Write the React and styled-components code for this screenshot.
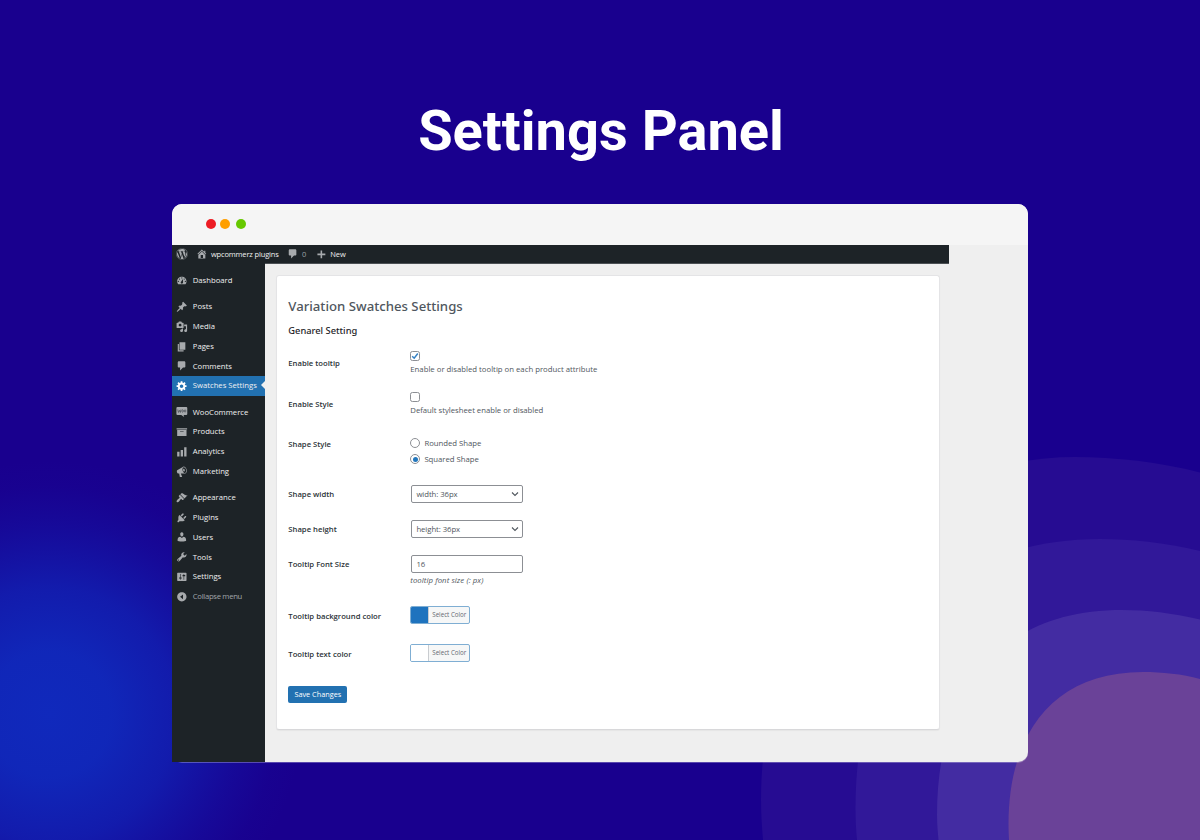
import React from 'react';
import styled, { createGlobalStyle } from 'styled-components';
import { FaWordpress } from 'react-icons/fa';

const Global = createGlobalStyle`
  * { box-sizing: border-box; }
  body { margin: 0; background: #19008e; overflow: hidden; }
`;

const Stage = styled.main`
  position: relative;
  width: 1200px;
  height: 840px;
  overflow: hidden;
  background: #19008e;
  font-family: 'Open Sans', 'Noto Sans', sans-serif;
  display: flex;
  flex-direction: column;
  align-items: center;
`;

const Backdrop = styled.svg`
  position: absolute;
  inset: 0;
`;

const Title = styled.h1`
  position: relative;
  margin: 0;
  height: 204px;
  padding: 98px 0 0 2px;
  font: 700 56px/67px Roboto, sans-serif;
  color: #fff;
  white-space: nowrap;
`;

const Window = styled.section`
  position: relative;
  width: 856px;
  height: 558px;
  border-radius: 10px;
  background: #efefef;
  box-shadow: 0 1px 0 rgba(255, 255, 255, 0.28);
`;

const TitleBar = styled.header`
  height: 41px;
  border-radius: 10px 10px 0 0;
  background: #f5f5f5;
  display: flex;
  align-items: center;
  padding-left: 34px;
`;

const Dot = styled.span`
  width: 10px;
  height: 10px;
  border-radius: 50%;
  background: ${(p) => p.$color};
  margin: -1px ${(p) => p.$gap || 0}px 0 0;
`;

const AdminBar = styled.nav`
  width: 777px;
  height: 19px;
  background: #1d2327;
  border-bottom: 1px solid #4b5054;
  display: flex;
  align-items: center;
  padding: 0 0 0 4px;
  color: #f0f0f1;
  font-size: 7.5px;
  line-height: 18px;
`;

const BarItem = styled.span`
  display: flex;
  align-items: center;
  gap: ${(p) => p.$gap || 3}px;
  margin-right: ${(p) => p.$after || 0}px;
  color: ${(p) => (p.$dim ? '#9ca2a7' : '#f0f0f1')};
  white-space: nowrap;
  letter-spacing: ${(p) => p.$track || 0}px;
`;

const Icon = styled.svg`
  width: ${(p) => p.$size || 11.7}px;
  height: ${(p) => p.$size || 11.7}px;
  fill: ${(p) => p.$color || '#a7aaad'};
  color: ${(p) => p.$color || '#a7aaad'};
  flex: none;
`;

const Body = styled.div`
  display: flex;
  height: 498px;
`;

const Sidebar = styled.aside`
  width: 93px;
  height: 499px;
  margin-top: -1px;
  background: #1d2327;
  padding-top: 7.7px;
  flex: none;
`;

const MenuItem = styled.div`
  position: relative;
  height: 19.8px;
  margin-top: ${(p) => (p.$gap ? 6.4 : 0)}px;
  padding-left: 4.4px;
  display: flex;
  align-items: center;
  gap: 4.7px;
  font-size: 7.7px;
  line-height: 19px;
  white-space: nowrap;
  letter-spacing: ${(p) => p.$track || 0}px;
  color: ${(p) => (p.$dim ? '#a0a5aa' : '#f0f0f1')};
  background: ${(p) => (p.$active ? '#2271b1' : 'transparent')};
`;

const Pointer = styled.i`
  position: absolute;
  right: 0;
  top: 5.2px;
  border: 4.7px solid transparent;
  border-right-color: #efefef;
  border-left: 0;
`;

const Card = styled.div`
  width: 664px;
  height: 455px;
  margin: 11px 0 0 11px;
  padding: 21px 12px 0 11.3px;
  background: #fff;
  border: 1px solid #e4e4e6;
  border-bottom-color: #d8d8da;
  border-radius: 3px;
  box-shadow: 0 1px 1px rgba(0, 0, 0, 0.04);
`;

const Heading = styled.h2`
  margin: 0;
  font-family: 'Noto Sans', sans-serif;
  font-size: 13.2px;
  line-height: 18px;
  font-weight: 500;
  color: #50575e;
`;

const Subheading = styled.h3`
  margin: 8px 0 0;
  font-family: 'Noto Sans', sans-serif;
  font-size: 9.3px;
  line-height: 16px;
  font-weight: 500;
  color: #1d2327;
`;

const Form = styled.div`
  margin-top: 4.4px;
`;

const Row = styled.div`
  display: grid;
  grid-template-columns: 122px 1fr;
  height: ${(p) => p.$h}px;
`;

const Label = styled.div`
  padding-top: ${(p) => p.$top}px;
  font-size: 7.7px;
  line-height: 12px;
  font-weight: 600;
  color: #2c3338;
`;

const Control = styled.div`
  padding-top: ${(p) => p.$top}px;
  font-size: 7.75px;
  line-height: 12px;
  color: #50575e;
  display: flex;
  flex-direction: column;
  align-items: flex-start;
`;

const Check = styled.span`
  width: 10px;
  height: 10px;
  border: 1px solid #8c8f94;
  border-radius: 2.4px;
  background: #fff;
  display: flex;
  align-items: center;
  justify-content: center;
`;

const Description = styled.p`
  margin: ${(p) => p.$top || 2}px 0 0;
  letter-spacing: ${(p) => p.$track || 0}px;
  font-style: ${(p) => (p.$italic ? 'italic' : 'normal')};
  white-space: nowrap;
`;

const RadioLine = styled.div`
  height: 16.5px;
  display: flex;
  align-items: center;
  gap: 4.1px;
  letter-spacing: -0.03px;
`;

const Radio = styled.span`
  width: 10px;
  height: 10px;
  border: 1px solid #8c8f94;
  border-radius: 50%;
  display: flex;
  align-items: center;
  justify-content: center;
  &::after {
    content: '';
    width: 5px;
    height: 5px;
    border-radius: 50%;
    background: ${(p) => (p.$on ? '#2277bd' : 'transparent')};
  }
`;

const Field = styled.div`
  width: 112px;
  height: 18px;
  margin-left: 0.5px;
  border: 1px solid #8c8f94;
  border-radius: 2px;
  background: #fff;
  padding: 0 3px 0 4.6px;
  display: flex;
  align-items: center;
  justify-content: space-between;
  color: #50575e;
  letter-spacing: -0.07px;
`;

const ColorPicker = styled.div`
  width: 60px;
  height: 18px;
  border: 1px solid #7faed3;
  border-radius: 2px;
  display: flex;
  overflow: hidden;
  background: #f6f7f7;
`;

const Swatch = styled.span`
  width: 17px;
  background: ${(p) => p.$color};
`;

const PickerText = styled.span`
  flex: 1;
  border-left: 1px solid #c9ccd0;
  font-size: 6.2px;
  line-height: 16px;
  text-align: center;
  color: #646970;
  white-space: nowrap;
`;

const Save = styled.button`
  display: block;
  width: 59px;
  height: 17px;
  margin: 12.3px 0 0;
  padding: 0;
  border: 0;
  border-radius: 2px;
  background: #2271b1;
  color: #fff;
  font: 400 7.3px/17px 'Open Sans', sans-serif;
  white-space: nowrap;
`;

const icons = {
  dashboard: 'M3.76 16h12.48c1.1-1.37 1.76-3.11 1.76-5 0-4.42-3.58-8-8-8s-8 3.58-8 8c0 1.89.66 3.63 1.76 5zM10 4c.55 0 1 .45 1 1s-.45 1-1 1-1-.45-1-1 .45-1 1-1zM6 6c.55 0 1 .45 1 1s-.45 1-1 1-1-.45-1-1 .45-1 1-1zm8 0c.55 0 1 .45 1 1s-.45 1-1 1-1-.45-1-1 .45-1 1-1zm-5.37 5.55L12 7v6c0 1.1-.9 2-2 2s-2-.9-2-2c0-.57.24-1.08.63-1.45zM4 10c.55 0 1 .45 1 1s-.45 1-1 1-1-.45-1-1 .45-1 1-1zm12 0c.55 0 1 .45 1 1s-.45 1-1 1-1-.45-1-1 .45-1 1-1z',
  pin: 'M10.44 3.02l1.82-1.82 6.36 6.35-1.83 1.82c-1.05-.68-2.48-.57-3.41.36l-.75.75c-.92.93-1.04 2.35-.35 3.41l-1.83 1.82-2.41-2.41-2.8 2.79c-.42.42-3.38 2.71-3.8 2.29s1.86-3.39 2.28-3.81l2.79-2.79L4.1 9.36l1.83-1.82c1.05.69 2.48.57 3.4-.36l.75-.75c.93-.92 1.05-2.35.36-3.41z',
  media: 'M13 11V4c0-.55-.45-1-1-1h-1.67L9 1H5L3.67 3H2c-.55 0-1 .45-1 1v7c0 .55.45 1 1 1h10c.55 0 1-.45 1-1zM7 4.5c1.38 0 2.5 1.12 2.5 2.5S8.38 9.5 7 9.5 4.5 8.38 4.5 7 5.62 4.5 7 4.5zM14 6h5v10.5c0 1.38-1.12 2.5-2.5 2.5S14 17.88 14 16.5s1.12-2.5 2.5-2.5c.17 0 .34.02.5.05V9h-3V6zm-4 8.05V13h2v3.5c0 1.38-1.12 2.5-2.5 2.5S7 17.88 7 16.5 8.12 14 9.5 14c.17 0 .34.02.5.05z',
  page: 'M6 15V2h10v13H6zm-1 1h8v2H3V5h2v11z',
  comment: 'M5 2h9c1.1 0 2 .9 2 2v7c0 1.1-.9 2-2 2h-2l-5 5v-5H5c-1.1 0-2-.9-2-2V4c0-1.1.9-2 2-2z',
  gear: 'M18 12h-2.18c-.17.7-.44 1.35-.81 1.93l1.54 1.54-2.1 2.1-1.54-1.54c-.58.36-1.23.63-1.91.79V19H8v-2.18c-.68-.16-1.33-.43-1.91-.79l-1.54 1.54-2.12-2.12 1.54-1.54c-.36-.58-.63-1.23-.79-1.91H1V9.03h2.17c.16-.7.44-1.35.8-1.94L2.43 5.55l2.1-2.1 1.54 1.54c.58-.37 1.24-.64 1.93-.81V2h3v2.18c.68.16 1.33.43 1.91.79l1.54-1.54 2.12 2.12-1.54 1.54c.36.59.64 1.24.8 1.94H18V12zm-8.5 1.5c1.66 0 3-1.34 3-3s-1.34-3-3-3-3 1.34-3 3 1.34 3 3 3z',
  archive: 'M19 4v2H1V4h18zM2 7h16v10H2V7zm11 3V9H7v1h6z',
  chart: 'M18 18V2h-4v16h4zm-6 0V7H8v11h4zm-6 0v-8H2v8h4z',
  megaphone: 'M18.15 5.94c.46 1.62.38 3.22-.02 4.48-.42 1.28-1.26 2.18-2.3 2.48-.16.06-.26.06-.4.06-.06.02-.12.02-.18.02-.06.02-.14.02-.22.02h-6.8l2.22 5.5c.02.14-.06.26-.14.34-.08.1-.24.16-.34.16H6.95c-.1 0-.26-.06-.34-.16-.08-.08-.16-.2-.14-.34l-1-5.5H4.25l-.02-.02c-.5.06-1.08-.18-1.54-.62s-.88-1.08-1.06-1.88c-.24-.8-.2-1.56-.02-2.2.18-.62.58-1.08 1.06-1.3l.02-.02 9-5.4c.1-.06.18-.1.24-.16.06-.04.14-.08.24-.12.16-.08.28-.12.5-.18 1.04-.3 2.24.1 3.22.98s1.84 2.24 2.26 3.86zm-2.58 5.98h-.02c.4-.1.74-.34 1.04-.7.58-.7.86-1.76.86-3.04 0-.64-.1-1.3-.28-1.98-.34-1.36-1.02-2.5-1.78-3.24s-1.68-1.1-2.46-.88c-.82.22-1.4.96-1.7 2-.32 1.04-.28 2.36.06 3.72.38 1.36 1 2.5 1.8 3.24.78.74 1.62 1.1 2.48.88zm-2.54-7.08c.22-.04.42-.02.62.04.38.16.76.48 1.02 1s.42 1.2.42 1.78c0 .3-.04.56-.12.8-.18.48-.44.84-.86.94-.34.1-.8-.06-1.14-.4s-.64-.86-.78-1.5c-.18-.62-.12-1.24.02-1.72s.48-.84.82-.94z',
  brush: 'M14.48 11.06L7.41 3.99l1.5-1.5c.5-.56 2.3-.47 3.51.32 1.21.8 1.43 1.28 2.91 2.1 1.18.64 2.45 1.26 4.45.85zm-.71.71L6.7 4.7 4.93 6.47c-.39.39-.39 1.02 0 1.41l1.06 1.06c.39.39.39 1.03 0 1.42-.6.6-1.43 1.11-2.21 1.69-.35.26-.7.53-1.01.84C1.43 14.23.4 16.08 1.4 17.07c.99 1 2.84-.03 4.18-1.36.31-.31.58-.66.85-1.02.57-.78 1.08-1.61 1.69-2.21.39-.39 1.02-.39 1.41 0l1.06 1.06c.39.39 1.02.39 1.41 0z',
  plug: 'M13.11 4.36L9.87 7.6 8 5.73l3.24-3.24c.35-.34 1.05-.2 1.56.32.52.51.66 1.21.31 1.55zm-8 1.77l.91-1.12 9.01 9.01-1.19.84c-.71.71-2.63 1.16-3.82 1.16H6.14L4.9 17.26c-.59.59-1.54.59-2.12 0-.59-.58-.59-1.53 0-2.12l1.24-1.24v-3.88c0-1.13.4-3.19 1.09-3.89zm7.26 3.97l3.24-3.24c.34-.35 1.04-.21 1.55.31.52.51.66 1.21.31 1.55l-3.24 3.25z',
  user: 'M10 9.25c-2.27 0-2.73-3.44-2.73-3.44C7 4.02 7.82 2 9.97 2c2.16 0 2.98 2.02 2.71 3.81 0 0-.41 3.44-2.68 3.44zm0 2.57L12.72 10c2.39 0 4.52 2.33 4.52 4.53v2.49s-3.65 1.13-7.24 1.13c-3.65 0-7.24-1.13-7.24-1.13v-2.49c0-2.25 1.94-4.48 4.47-4.48z',
  wrench: 'M16.68 9.77c-1.34 1.34-3.3 1.67-4.95.99l-5.41 6.52c-.99.99-2.59.99-3.58 0s-.99-2.59 0-3.57l6.52-5.42c-.68-1.65-.35-3.61.99-4.95 1.28-1.28 3.12-1.62 4.72-1.06l-2.89 2.89 2.82 2.82 2.86-2.87c.53 1.58.18 3.39-1.08 4.65zM3.81 16.21c.4.39 1.04.39 1.43 0 .4-.4.4-1.04 0-1.43-.39-.4-1.03-.4-1.43 0-.39.39-.39 1.03 0 1.43z',
  sliders: 'M18 16V4c0-.55-.45-1-1-1H3c-.55 0-1 .45-1 1v12c0 .55.45 1 1 1h14c.55 0 1-.45 1-1zM8 11h1c.55 0 1 .45 1 1s-.45 1-1 1H8v1.5c0 .28-.22.5-.5.5s-.5-.22-.5-.5V13H6c-.55 0-1-.45-1-1s.45-1 1-1h1V5.5c0-.28.22-.5.5-.5s.5.22.5.5V11zm5-2h-1c-.55 0-1-.45-1-1s.45-1 1-1h1V5.5c0-.28.22-.5.5-.5s.5.22.5.5V7h1c.55 0 1 .45 1 1s-.45 1-1 1h-1v5.5c0 .28-.22.5-.5.5s-.5-.22-.5-.5V9z',
  collapse: 'M10 2c4.42 0 8 3.58 8 8s-3.58 8-8 8-8-3.58-8-8 3.58-8 8-8zm2 12V6l-5 4z',
  home: 'M16 8.5l1.53 1.53-1.06 1.06L10 4.6l-6.47 6.49-1.06-1.06L10 2.5l4 4v-2h2v4zm-6-2.46l6 5.99V18H4v-5.97zM12 17v-5H8v5h4z',
  plus: 'M17.8 8.7v3h-6.1V17.800h-3v-6.100h-6v-3h6V2.800h3v5.900z',
};

const Glyph = ({ name, ...rest }) => (
  <Icon viewBox="0 0 20 20" {...rest}>
    <path fillRule="evenodd" d={icons[name]} />
  </Icon>
);

const WooGlyph = () => (
  <Icon viewBox="0 0 20 20">
    <path d="M2.5 1.5h15A1.8 1.8 0 0 1 19.3 3.3v10.2a1.8 1.8 0 0 1-1.8 1.8h-4.5l1 3.5-5-3.5H2.5A1.8 1.8 0 0 1 .7 13.5V3.3A1.8 1.8 0 0 1 2.5 1.5z" />
    <path d="M3 6l1.2 5L6 7.5 7.5 11 8.5 6" fill="none" stroke="#4a4f54" strokeWidth="1.3" />
    <ellipse cx="11.3" cy="8.5" rx="1.3" ry="2.2" fill="none" stroke="#4a4f54" strokeWidth="1.2" />
    <ellipse cx="15.5" cy="8.5" rx="1.3" ry="2.2" fill="none" stroke="#4a4f54" strokeWidth="1.2" />
  </Icon>
);

const menu = [
  { label: 'Dashboard', icon: 'dashboard' },
  { label: 'Posts', icon: 'pin', gap: true },
  { label: 'Media', icon: 'media' },
  { label: 'Pages', icon: 'page' },
  { label: 'Comments', icon: 'comment' },
  { label: 'Swatches Settings', icon: 'gear', active: true },
  { label: 'WooCommerce', icon: 'woo', gap: true },
  { label: 'Products', icon: 'archive' },
  { label: 'Analytics', icon: 'chart' },
  { label: 'Marketing', icon: 'megaphone' },
  { label: 'Appearance', icon: 'brush', gap: true },
  { label: 'Plugins', icon: 'plug' },
  { label: 'Users', icon: 'user' },
  { label: 'Tools', icon: 'wrench' },
  { label: 'Settings', icon: 'sliders' },
  { label: 'Collapse menu', icon: 'collapse', dim: true, track: -0.3 },
];

const Chevron = () => (
  <svg width="8" height="8" viewBox="0 0 8 8" fill="none" stroke="#50575e" strokeWidth="1.1">
    <path d="M1 2.5l3 3 3-3" />
  </svg>
);

const SelectRow = ({ label, value }) => (
  <Row $h={35}>
    <Label $top={11.5}>{label}</Label>
    <Control $top={8}>
      <Field>
        {value}
        <Chevron />
      </Field>
    </Control>
  </Row>
);

const ColorRow = ({ label, color }) => (
  <Row $h={38.2}>
    <Label $top={12.4}>{label}</Label>
    <Control $top={9}>
      <ColorPicker>
        <Swatch $color={color} />
        <PickerText>Select Color</PickerText>
      </ColorPicker>
    </Control>
  </Row>
);

export default function App() {
  return (
    <Stage>
      <Global />
      <Backdrop width="1200" height="840" viewBox="0 0 1200 840">
        <defs>
          <radialGradient id="glow" gradientUnits="userSpaceOnUse" cx="49" cy="714" r="254">
            <stop offset="0" stopColor="#1029bc" />
            <stop offset="0.25" stopColor="#1028ba" stopOpacity="0.97" />
            <stop offset="0.5" stopColor="#1026b8" stopOpacity="0.72" />
            <stop offset="0.75" stopColor="#1022b4" stopOpacity="0.28" />
            <stop offset="0.9" stopColor="#1020b0" stopOpacity="0.06" />
            <stop offset="1" stopColor="#1020b0" stopOpacity="0" />
          </radialGradient>
        </defs>
        <rect width="1200" height="840" fill="url(#glow)" />
        <path fill="#260c92" d="M1200 472.5C1160 462 1115 457 1075 457C900 457 761 600 761 800C761 815 762 828 763 840H1200Z" />
        <path fill="#311899" d="M1200 551C1165 542.5 1130 539 1100 539C945 539 855.5 640 855.5 808C855.5 820 856 830 857 840H1200Z" />
        <path fill="#432ca2" d="M1200 619.5C1172 613 1147 610 1122 610C1000 610 937 690 937 815C937 825 938 833 938.5 840H1200Z" />
        <path fill="#6a4298" d="M1200 679C1182 674 1162 672 1143 672C1052 672 1008.5 735 1008.5 824C1008.5 830 1008.8 835 1009 840H1200Z" />
      </Backdrop>
      <Title>Settings Panel</Title>
      <Window>
        <TitleBar>
          <Dot $color="#ed1c24" $gap={4} />
          <Dot $color="#ff9f00" $gap={6} />
          <Dot $color="#66c800" />
        </TitleBar>
        <AdminBar>
          <BarItem $after={8.2}>
            <Icon as={FaWordpress} $size={12} />
          </BarItem>
          <BarItem $after={8.3} $track={-0.15}>
            <Glyph name="home" />
            wpcommerz plugins
          </BarItem>
          <BarItem $dim $gap={3.4} $after={9.3}>
            <Glyph name="comment" />0
          </BarItem>
          <BarItem $gap={4}>
            <Glyph name="plus" $size={10.5} />
            New
          </BarItem>
        </AdminBar>
        <Body>
          <Sidebar>
            {menu.map((m) => (
              <MenuItem key={m.label} $gap={m.gap} $active={m.active} $dim={m.dim} $track={m.track}>
                {m.icon === 'woo' ? <WooGlyph /> : <Glyph name={m.icon} $color={m.active ? '#fff' : undefined} />}
                {m.label}
                {m.active && <Pointer />}
              </MenuItem>
            ))}
          </Sidebar>
          <Card>
            <Heading>Variation Swatches Settings</Heading>
            <Subheading>Genarel Setting</Subheading>
            <Form>
              <Row $h={41}>
                <Label $top={13.3}>Enable tooltip</Label>
                <Control $top={7.8}>
                  <Check>
                    <svg width="8" height="8" viewBox="0 0 8 8" fill="none" stroke="#3582c4" strokeWidth="1.5">
                      <path d="M1.2 4.2l2 2L6.8 1.5" />
                    </svg>
                  </Check>
                  <Description>Enable or disabled tooltip on each product attribute</Description>
                </Control>
              </Row>
              <Row $h={40.8}>
                <Label $top={13.5}>Enable Style</Label>
                <Control $top={7.5}>
                  <Check />
                  <Description $track={-0.02}>Default stylesheet enable or disabled</Description>
                </Control>
              </Row>
              <Row $h={51.8}>
                <Label $top={13}>Shape Style</Label>
                <Control $top={9.4}>
                  <RadioLine>
                    <Radio />
                    Rounded Shape
                  </RadioLine>
                  <RadioLine>
                    <Radio $on />
                    Squared Shape
                  </RadioLine>
                </Control>
              </Row>
              <SelectRow label="Shape width" value="width: 36px" />
              <SelectRow label="Shape height" value="height: 36px" />
              <Row $h={50.2}>
                <Label $top={11.5}>Tooltip Font Size</Label>
                <Control $top={8}>
                  <Field>16</Field>
                  <Description $italic $top={1.5} $track={0.08}>tooltip font size (: px)</Description>
                </Control>
              </Row>
              <ColorRow label="Tooltip background color" color="#1e73be" />
              <ColorRow label="Tooltip text color" color="#ffffff" />
            </Form>
            <Save>Save Changes</Save>
          </Card>
        </Body>
      </Window>
    </Stage>
  );
}
